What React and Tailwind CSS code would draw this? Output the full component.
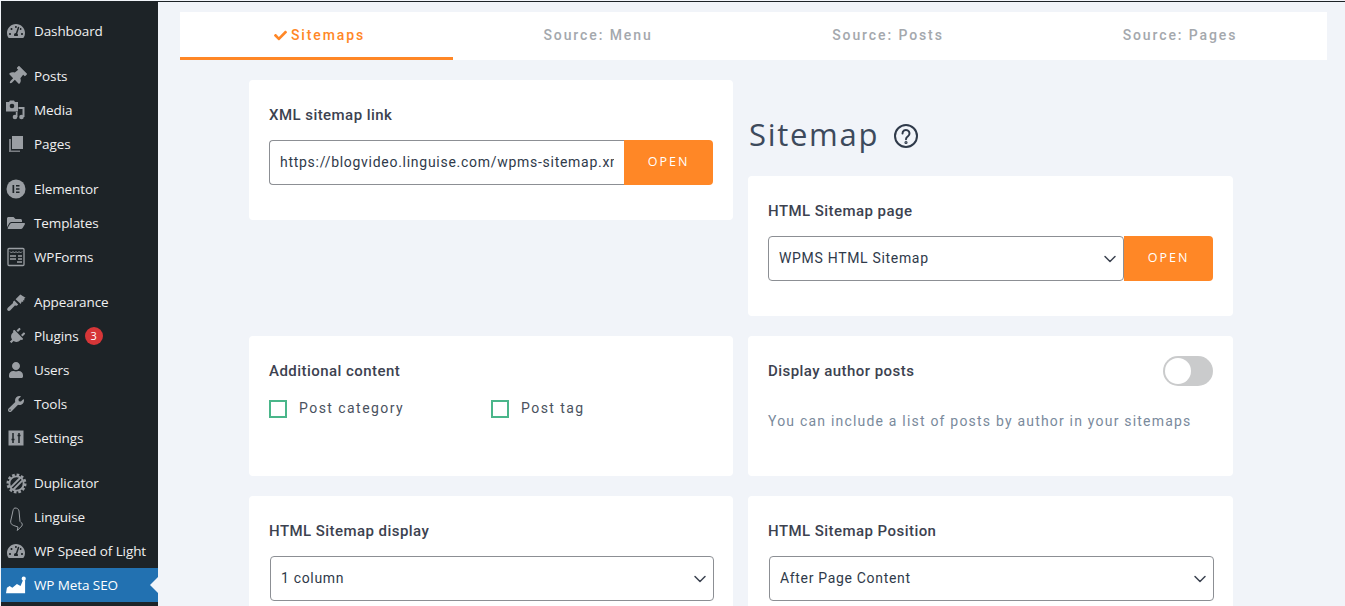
import { ChevronDown } from 'lucide-react';
import {
  FaCheck,
  FaTachometerAlt,
  FaThumbtack,
  FaFolderOpen,
  FaPlug,
  FaUser,
  FaWrench,
} from 'react-icons/fa';

const MediaIcon = () => (
  <svg viewBox="0 0 20 20" className="h-[20px] w-[20px] fill-current">
    <path d="M0 2h3l1-1.500h4L9 2h3v9.500H0z" />
    <circle cx="6" cy="6" r="2.300" fill="#1d2327" />
    <path d="M12.500 7h6v10h-2V9h-4z" />
    <circle cx="15.500" cy="17" r="2.300" />
    <path d="M9.800 12h1.700v5h-1.700z" />
    <circle cx="9" cy="17" r="2.300" />
  </svg>
);

const PagesIcon = () => (
  <svg viewBox="0 0 20 20" className="h-[20px] w-[20px] fill-current">
    <path d="M6 2h11v13H6z" />
    <path d="M3 5h2v11.500h9V18H3z" opacity="0.75" />
  </svg>
);

const ElementorIcon = () => (
  <svg viewBox="0 0 20 20" className="h-[20px] w-[20px]">
    <circle cx="10" cy="10" r="9.500" fill="currentColor" />
    <path d="M6.500 6h1.700v8H6.500zM10 6h3.500v1.600H10zM10 9.200h3.500v1.600H10zM10 12.400h3.500V14H10z" fill="#1d2327" />
  </svg>
);

const FormsIcon = () => (
  <svg viewBox="0 0 20 20" className="h-[20px] w-[20px] fill-none stroke-current">
    <rect x="2" y="1.500" width="16" height="17" rx="1" strokeWidth="1.300" />
    <path d="M4 4.500l1.500 1.500 1.500-1.500 1.500 1.500L10 4.500l1.500 1.500L13 4.500l1.500 1.500L16 4.500" strokeWidth="1" />
    <path d="M4 9h6M12 9h4M4 12h6M12 12h4M11 15h5" strokeWidth="1.400" />
  </svg>
);

const AppearanceIcon = () => (
  <svg viewBox="0 0 20 20" className="h-[19px] w-[19px] fill-current">
    <path d="M9 6.500L14 1.500l5.500 3.500-1.500 1 .5 1.500-1.500 0 0 2-1.500-.5-1 2.500z" />
    <path d="M7.800 8l4 4-1.500 1.500-2-.3-5 5.300c-1 .8-2.300.4-2.800-.3-.5-.8-.4-2 .4-2.800l5.500-4.900-.2-1z" />
  </svg>
);

const SettingsIcon = () => (
  <svg viewBox="0 0 20 20" className="h-[20px] w-[20px]">
    <rect x="2.500" y="2.500" width="15" height="15" fill="currentColor" />
    <path d="M7 5v10M13 5v10M5.500 11.500h3M11.500 7.500h3" stroke="#1d2327" strokeWidth="1.500" />
  </svg>
);

const DuplicatorIcon = () => (
  <svg viewBox="0 0 22 22" className="h-[21px] w-[21px] fill-none stroke-current">
    <circle cx="11" cy="11" r="7.500" strokeWidth="2" />
    <circle cx="11" cy="11" r="9.200" strokeWidth="2.600" strokeDasharray="2.800 2" />
    <path d="M5 15L15 5M8 17L17 8" strokeWidth="2" />
  </svg>
);

const LinguiseIcon = () => (
  <svg viewBox="0 0 20 24" className="h-[24px] w-[20px] translate-y-[2px] fill-none stroke-current" strokeWidth="1">
    <path d="M9 1C7.500 1 7 3 6.500 6L4.700 14c-.4 2 1 4 3 4.500l4.300 1.500-.7 3.500 4.500-4.500c1-1.500.3-3-.8-3.500L14 14.500 13 4c-.2-2-2-3-4-3z" />
  </svg>
);

const SeoIcon = () => (
  <svg viewBox="0 0 22 20" className="h-[20px] w-[20px] fill-white">
    <path d="M0 19l1-6 3-2 3 2 5-4 4 2 3-7 2 1v14z" />
    <circle cx="19.500" cy="3" r="2.300" />
  </svg>
);

const menu = [
  { label: 'Dashboard', icon: <FaTachometerAlt size={18} /> },
  { gap: true },
  { label: 'Posts', icon: <FaThumbtack size={19} className="rotate-45" /> },
  { label: 'Media', icon: <MediaIcon /> },
  { label: 'Pages', icon: <PagesIcon /> },
  { gap: true },
  { label: 'Elementor', icon: <ElementorIcon /> },
  { label: 'Templates', icon: <FaFolderOpen size={18} /> },
  { label: 'WPForms', icon: <FormsIcon /> },
  { gap: true },
  { label: 'Appearance', icon: <AppearanceIcon /> },
  { label: 'Plugins', icon: <FaPlug size={17} className="rotate-45" />, badge: '3' },
  { label: 'Users', icon: <FaUser size={16} /> },
  { label: 'Tools', icon: <FaWrench size={16} /> },
  { label: 'Settings', icon: <SettingsIcon /> },
  { gap: true },
  { label: 'Duplicator', icon: <DuplicatorIcon /> },
  { label: 'Linguise', icon: <LinguiseIcon /> },
  { label: 'WP Speed of Light', icon: <FaTachometerAlt size={18} /> },
  { label: 'WP Meta SEO', icon: <SeoIcon />, active: true },
];

function Sidebar() {
  return (
    <aside className="w-[157px] shrink-0 bg-[#1d2327] pt-[12px] font-['Open_Sans',sans-serif] text-[13.5px] tracking-[-0.1px] text-[#f0f0f1]">
      {menu.map((item, i) =>
        item.gap ? (
          <div key={i} className="h-[11px]" />
        ) : (
          <div
            key={item.label}
            className={`relative flex h-[34px] items-center ${item.active ? 'bg-[#2271b1] text-white' : ''}`}
          >
            <span className={`mr-[3px] flex w-[30px] justify-center ${item.active ? 'text-white' : 'text-[#9a9ea3]'}`}>
              {item.icon}
            </span>
            <span className="whitespace-nowrap pt-[1px]">{item.label}</span>
            {item.badge && (
              <span className="ml-[6px] flex h-[18px] w-[18px] items-center justify-center rounded-full bg-[#d63638] text-[11px] tracking-normal text-white">
                {item.badge}
              </span>
            )}
            {item.active && (
              <span className="absolute right-0 top-[9px] h-0 w-0 border-y-[8px] border-r-[8px] border-y-transparent border-r-[#f1f4f9]" />
            )}
          </div>
        ),
      )}
    </aside>
  );
}

function Tabs() {
  const tabs = ['Source: Menu', 'Source: Posts', 'Source: Pages'];
  return (
    <div className="ml-[22px] grid h-[48px] w-[1147px] grid-cols-[273px_290px_290px_294px] bg-white text-[14px] font-medium tracking-[1.9px] text-[#a4a8ad]">
      <div className="flex items-center justify-center gap-[4px] border-b-[3px] border-[#ff8726] pl-[6px] pt-[1px] text-[#ff8726]">
        <FaCheck size={13} />
        <span>Sitemaps</span>
      </div>
      {tabs.map(t => (
        <div key={t} className="flex items-center justify-center pb-[2px]">{t}</div>
      ))}
    </div>
  );
}

function Card({ className = '', children }) {
  return <div className={`rounded-[4px] bg-white p-[20px] ${className}`}>{children}</div>;
}

function Label({ children }) {
  return <div className="h-[30px] pt-[5px] text-[15px] font-medium leading-[20px] tracking-[0.45px] text-[#3c4250]">{children}</div>;
}

function OpenButton() {
  return (
    <button className="flex h-[45px] w-[89px] shrink-0 items-center justify-center rounded-r-[4px] bg-[#ff8726] pb-[1px] font-['Open_Sans',sans-serif] text-[12.5px] tracking-[2px] text-white">
      OPEN
    </button>
  );
}

function Select({ value, className = '' }) {
  return (
    <div className={`relative h-[45px] ${className}`}>
      <select
        defaultValue={value}
        className="h-full w-full appearance-none rounded-[4px] border border-[#8c8f94] bg-white pl-[10px] pr-[30px] text-[14px] tracking-[0.68px] text-[#2f3a4a]"
      >
        <option>{value}</option>
      </select>
      <ChevronDown size={20} strokeWidth={1.8} className="pointer-events-none absolute right-[4px] top-[13px] text-[#3c4250]" />
    </div>
  );
}

function CheckItem({ label, className = '' }) {
  return (
    <label className={`flex items-center gap-[12px] ${className}`}>
      <span className="h-[18px] w-[18px] border-2 border-[#4ab68a] bg-white" />
      <span className="text-[14px] tracking-[1.45px] text-[#4a5260]">{label}</span>
    </label>
  );
}

export default function App() {
  return (
    <div className="h-[606px] w-[1345px] overflow-hidden bg-[#f1f4f9] pt-px pl-px font-['Roboto',sans-serif]">
      <div className="flex h-[605px] border-t border-[#1d2327]">
        <Sidebar />
        <main className="min-w-0 flex-1 pt-[10px]">
          <Tabs />
          <div className="ml-[91px] grid w-[984px] grid-cols-[484px_485px] gap-x-[15px] gap-y-[20px] pt-[20px]">
            <Card className="h-[140px] self-start">
              <Label>XML sitemap link</Label>
              <div className="flex pt-[10px]">
                <input
                  readOnly
                  value="https://blogvideo.linguise.com/wpms-sitemap.xml"
                  className="h-[45px] min-w-0 flex-1 rounded-l-[4px] border border-r-0 border-[#8c8f94] bg-white pb-[2px] pl-[10px] pr-[10px] text-[14px] tracking-[0.72px] text-[#2f3a4a] outline-none"
                />
                <OpenButton />
              </div>
            </Card>

            <div>
              <h1 className="flex h-[96px] items-center gap-[14px] pl-px pt-[12px] font-['Open_Sans',sans-serif] text-[31px] font-medium tracking-[1.7px] text-[#3d4a5c]">
                Sitemap
                <svg viewBox="0 0 26 26" className="mt-[3px] h-[26px] w-[26px] fill-none stroke-[#2f3a4a]" strokeWidth="2">
                  <circle cx="13" cy="13" r="11" />
                  <path d="M9.500 10.500a3.500 3.500 0 1 1 5.500 2.800c-1.300.9-2 1.500-2 3" strokeLinecap="round" />
                  <circle cx="13" cy="19.500" r="0.600" />
                </svg>
              </h1>
              <Card className="h-[140px]">
                <Label>HTML Sitemap page</Label>
                <div className="flex pt-[10px]">
                  <Select value="WPMS HTML Sitemap" className="min-w-0 flex-1" />
                  <OpenButton />
                </div>
              </Card>
            </div>

            <Card className="h-[140px]">
              <Label>Additional content</Label>
              <div className="flex pt-[12px]">
                <CheckItem label="Post category" className="w-[222px]" />
                <CheckItem label="Post tag" />
              </div>
            </Card>

            <Card className="h-[140px]">
              <div className="flex items-start justify-between">
                <Label>Display author posts</Label>
                <div className="flex h-[30px] w-[50px] items-center rounded-full bg-[#cacbcc] pl-[2px]">
                  <span className="h-[26px] w-[26px] rounded-full bg-white" />
                </div>
              </div>
              <p className="pt-[25px] text-[14px] leading-[20px] tracking-[1.2px] text-[#7a8a9c]">
                You can include a list of posts by author in your sitemaps
              </p>
            </Card>

            <Card className="h-[140px]">
              <Label>HTML Sitemap display</Label>
              <Select value="1 column" className="-mr-px ml-px mt-[10px]" />
            </Card>

            <Card className="h-[140px]">
              <Label>HTML Sitemap Position</Label>
              <Select value="After Page Content" className="-mr-px ml-px mt-[10px]" />
            </Card>
          </div>
        </main>
      </div>
    </div>
  );
}
